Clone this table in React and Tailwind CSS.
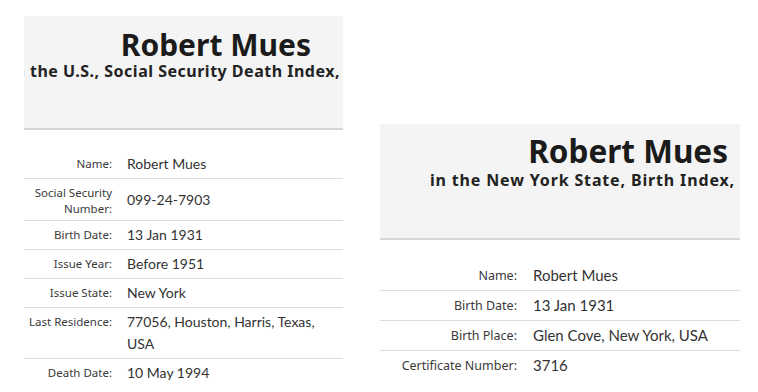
import React from 'react';

const ssdi = [
    { label: ['Name:'], value: ['Robert Mues'] },
    { label: ['Social Security', 'Number:'], value: ['099-24-7903'] },
    { label: ['Birth Date:'], value: ['13 Jan 1931'] },
    { label: ['Issue Year:'], value: ['Before 1951'] },
    { label: ['Issue State:'], value: ['New York'] },
    { label: ['Last Residence:'], value: ['77056, Houston, Harris, Texas,', 'USA'] },
    { label: ['Death Date:'], value: ['10 May 1994'] },
];

const birth = [
    { label: ['Name:'], value: ['Robert Mues'] },
    { label: ['Birth Date:'], value: ['13 Jan 1931'] },
    { label: ['Birth Place:'], value: ['Glen Cove, New York, USA'] },
    { label: ['Certificate Number:'], value: ['3716'] },
];

const noto = { fontFamily: '"Noto Sans", sans-serif' };

export default function App() {
    return (
        <div
            className="w-[758px] h-[392px] overflow-hidden bg-white flex items-start"
            style={{ fontFamily: 'Lato, "Noto Sans", sans-serif' }}
        >
            {/* SSDI card */}
            <div className="ml-[24px] mt-[16px] w-[319px] shrink-0">
                <div
                    className="h-[114px] bg-[#f4f4f4] border-b-2 border-[#d6d6d6] flex flex-col items-end overflow-hidden whitespace-nowrap"
                    style={noto}
                >
                    <h1 className="mt-[14px] mr-[32px] text-[30px] leading-[30px] font-bold text-[#1b1b1b]">
                        Robert Mues
                    </h1>
                    <h2 className="mt-[2px] mr-[3px] text-[16px] leading-[18px] font-bold tracking-[0.5px] text-[#222]">
                        in the U.S., Social Security Death Index,
                    </h2>
                </div>
                <div className="mt-[20px]">
                    {ssdi.map((row, i) => (
                        <div
                            key={i}
                            className={`flex items-center gap-[15px] py-[3px] ${i < ssdi.length - 1 ? 'border-b border-[#dcdcdc]' : ''}`}
                        >
                            <div
                                className="w-[88px] shrink-0 self-start mt-[3px] text-right text-[11.5px] leading-[16px] text-[#3a3a3a]"
                                style={noto}
                            >
                                {row.label.map((l) => (
                                    <div key={l}>{l}</div>
                                ))}
                            </div>
                            <div className="text-[14px] leading-[22px] text-[#333]">
                                {row.value.map((v) => (
                                    <div key={v}>{v}</div>
                                ))}
                            </div>
                        </div>
                    ))}
                </div>
            </div>

            {/* Birth index card */}
            <div className="ml-[37px] mt-[124px] w-[360px] shrink-0">
                <div
                    className="h-[116px] bg-[#f4f4f4] border-b-2 border-[#d6d6d6] flex flex-col items-end overflow-hidden whitespace-nowrap"
                    style={noto}
                >
                    <h1 className="mt-[11px] mr-[12px] text-[31.5px] leading-[32px] font-bold text-[#1b1b1b]">
                        Robert Mues
                    </h1>
                    <h2 className="mt-[4px] mr-[5px] text-[16px] leading-[18px] font-bold tracking-[0.85px] text-[#222]">
                        in the New York State, Birth Index,
                    </h2>
                </div>
                <div className="mt-[21px]">
                    {birth.map((row, i) => (
                        <div
                            key={i}
                            className={`flex items-center gap-[16px] py-[4px] ${i < birth.length - 1 ? 'border-b border-[#dcdcdc]' : ''}`}
                        >
                            <div
                                className="w-[137px] shrink-0 text-right text-[12.5px] leading-[21px] text-[#3a3a3a]"
                                style={noto}
                            >
                                {row.label.map((l) => (
                                    <div key={l}>{l}</div>
                                ))}
                            </div>
                            <div className="text-[15px] leading-[21px] text-[#333]">
                                {row.value.map((v) => (
                                    <div key={v}>{v}</div>
                                ))}
                            </div>
                        </div>
                    ))}
                </div>
            </div>
        </div>
    );
}
